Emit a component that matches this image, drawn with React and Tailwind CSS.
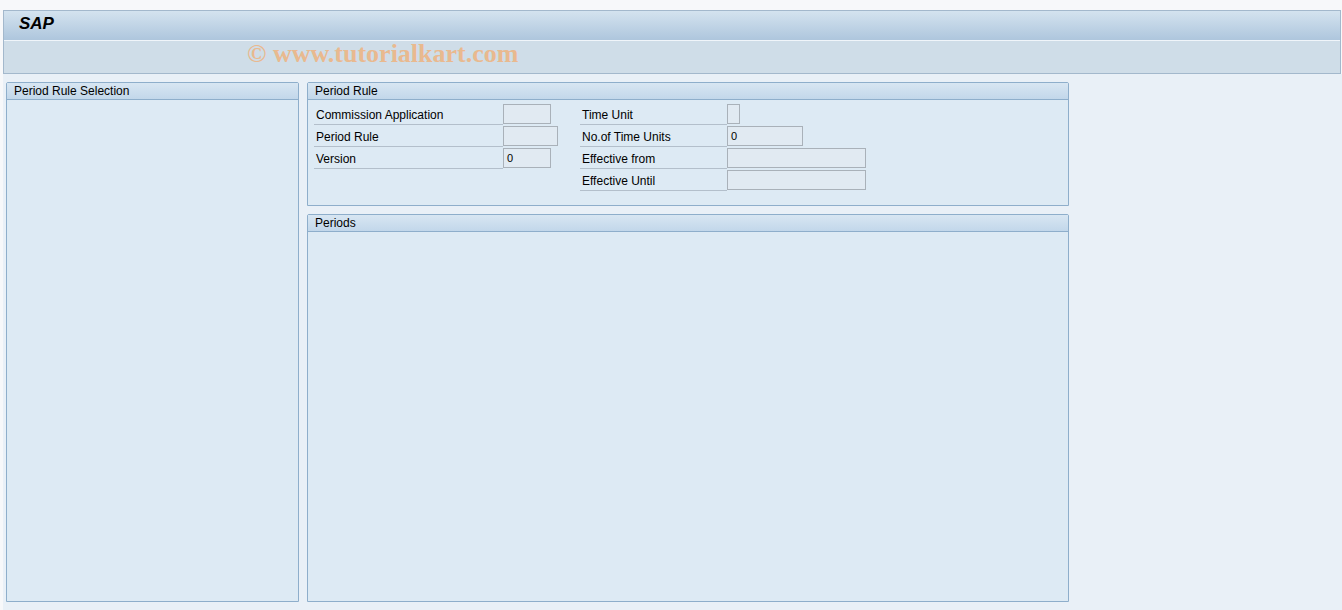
const font = { fontFamily: '"Liberation Sans", Arial, sans-serif' };

function Row({ label, labelW, w, value }) {
  return (
    <div className="flex h-[22px] items-start">
      <div className={`h-[21px] border-b border-[#b3bfcb] pl-[2px] pt-[2px] text-[12px] leading-[18px] text-black ${labelW}`}>{label}</div>
      <div className={`h-[20px] border border-[#a9b1b9] bg-[#e1eaf2] pl-[3px] text-[11px] leading-[18px] text-black ${w}`}>{value}</div>
    </div>
  );
}

function Panel({ title, className, children }) {
  return (
    <div className={`flex flex-col rounded-t-[2px] border border-[#8eaecb] bg-[#ddeaf4] ${className}`}>
      <div className="h-[17px] border-b border-[#8eaecb] bg-gradient-to-b from-[#d8e6f2] to-[#c2d7ea] pl-[7px] text-[12px] leading-[16px] text-black">{title}</div>
      <div className="flex-1">{children}</div>
    </div>
  );
}

export default function App() {
  return (
    <div className="flex h-[610px] w-[1342px] flex-col overflow-hidden bg-[#f7f8fa]" style={font}>
      <div className="h-[10px]" />
      <div className="ml-[3px] mr-[1px] border border-[#a3b8cc]">
        <div className="h-[30px] border-b border-[#f0f5fa] bg-gradient-to-b from-[#d4e3ef] to-[#aec6dd] pl-[15px] pt-[3px] text-[17px] font-bold italic leading-[20px] text-black">SAP</div>
        <div className="h-[32px] bg-[#cfdde8] pl-[243px] text-[26px] font-bold leading-[25px] text-[#e9b98f]" style={{ fontFamily: '"Liberation Serif", serif' }}>© www.tutorialkart.com</div>
      </div>
      <div className="ml-[3px] flex flex-1 gap-[8px] bg-[#e9f0f7] pl-[3px] pt-[8px]">
        <Panel title="Period Rule Selection" className="h-[520px] w-[293px]" />
        <div className="flex w-[762px] flex-col gap-[8px]">
          <Panel title="Period Rule" className="h-[124px]">
            <div className="flex pl-[6px] pt-[4px]">
              <div className="flex w-[266px] flex-col">
                <Row label="Commission Application" labelW="w-[189px]" w="w-[48px]" />
                <Row label="Period Rule" labelW="w-[189px]" w="w-[55px]" />
                <Row label="Version" labelW="w-[189px]" w="w-[48px]" value="0" />
              </div>
              <div className="flex flex-col">
                <Row label="Time Unit" labelW="w-[147px]" w="w-[13px]" />
                <Row label="No.of Time Units" labelW="w-[147px]" w="w-[76px]" value="0" />
                <Row label="Effective from" labelW="w-[147px]" w="w-[139px]" />
                <Row label="Effective Until" labelW="w-[147px]" w="w-[139px]" />
              </div>
            </div>
          </Panel>
          <Panel title="Periods" className="h-[388px]" />
        </div>
      </div>
    </div>
  );
}
